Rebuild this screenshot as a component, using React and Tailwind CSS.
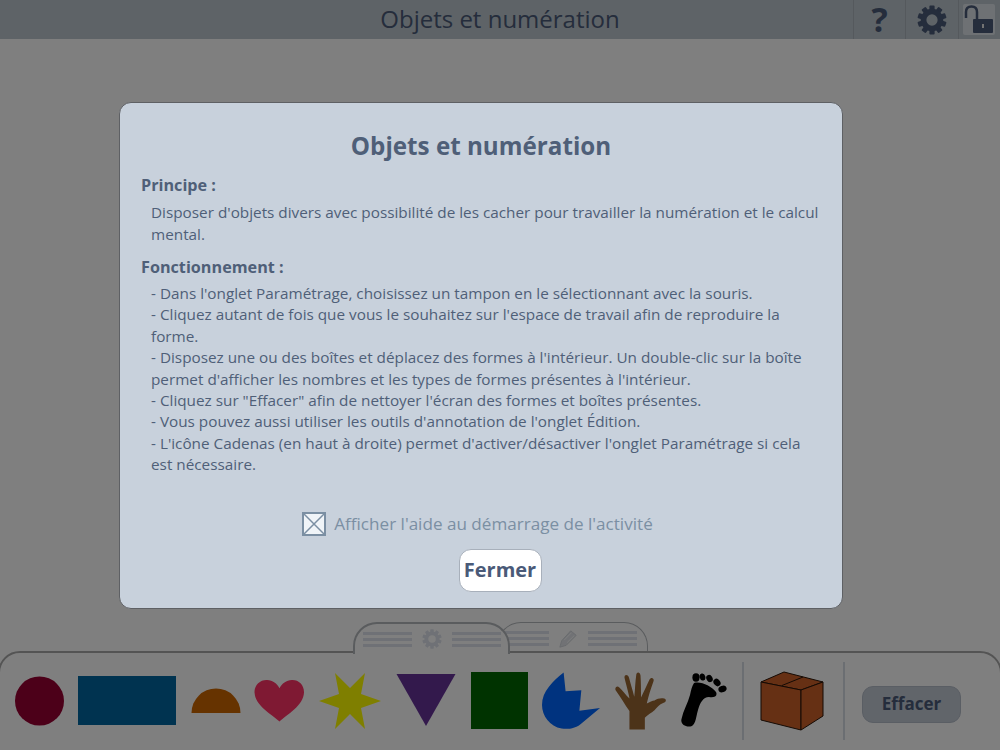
const FONT = { fontFamily: '"Open Sans","Noto Sans",sans-serif' };

function Gear({ size, color }) {
  const teeth = [0, 36, 72, 108, 144, 180, 216, 252, 288, 324];
  return (
    <svg width={size} height={size} viewBox="0 0 32 32">
      {teeth.map((a) => (
        <rect key={a} x="13.2" y="0.5" width="5.6" height="8" rx="1" fill={color} transform={`rotate(${a} 16 16)`} />
      ))}
      <circle cx="16" cy="16" r="9" fill="none" stroke={color} strokeWidth="6" />
    </svg>
  );
}

function Lines() {
  return (
    <div className="flex flex-col gap-[3px] w-[49px] shrink-0">
      <div className="h-[3px] bg-[#dfe3ec]" />
      <div className="h-[3px] bg-[#dfe3ec]" />
      <div className="h-[3px] bg-[#dfe3ec]" />
    </div>
  );
}

function Shapes() {
  return (
    <div className="flex items-center h-[99px] pl-[15px]">
      <svg width="50" height="50" viewBox="0 0 50 50" className="shrink-0">
        <circle cx="24.5" cy="25" r="24.5" fill="#990033" />
      </svg>
      <div className="w-[98px] h-[49px] bg-[#0066a0] ml-[13px] shrink-0" />
      <svg width="50" height="26" viewBox="0 0 50 26" className="ml-[15px] shrink-0">
        <path d="M0.5 25 A24.5 24.5 0 0 1 49.5 25 Z" fill="#cc6600" />
      </svg>
      <svg width="51" height="44" viewBox="0 0 52 44" className="ml-[13px] shrink-0">
        <path d="M26 43 C19 36 1 27 0.5 13 C0.5 5 7 0 13.5 0.5 C19 0.7 23.5 4 26 9 C28.5 4 33 0.7 38.5 0.5 C45 0 51 5 51 13 C50.5 27 33 36 26 43 Z" fill="#ff3366" />
      </svg>
      <svg width="62" height="56" viewBox="0 0 62 56" className="ml-[14px] shrink-0">
        <polygon points="0,28 20,21 16,0 31,15 46,0 42,21 62,28 42,35 46,56 31,41 16,56 20,35" fill="#ffff00" />
      </svg>
      <svg width="60" height="53" viewBox="0 0 60 53" className="ml-[15px] shrink-0">
        <polygon points="0.5,0 59.5,0 30,52" fill="#663399" />
      </svg>
      <div className="w-[57px] h-[57px] bg-[#006600] ml-[15px] shrink-0" />
      <svg width="59" height="58" viewBox="0 0 60 58" className="ml-[14px] shrink-0">
        <path d="M22 0 L24 19 L40 18 L38 39 L59 36 L41 51 C35 57 26 58 20 57 C8 55 0 44 0 33 C0 19 11 9 22 0 Z" fill="#0066ff" />
      </svg>
      <svg width="52" height="59" viewBox="0 0 54 60" className="ml-[14px] shrink-0">
        <path d="M15 60 L15 41 C10 34 6 27 1 20 C-1 17 2 14 4.5 16.5 C8 20 11 24 15 28 C14 21 11 12 10 7 C9 3 13 2 14.5 6 C16 12 18 18 20 26 C21 18 21 10 22 4 C22 0 26 0 26.5 4 C27 11 27 19 27 27 C30 21 33 14 36 8 C38 5 41 7 40 10 C37 18 35 25 33 33 C36 32 39 30 41 30 C44 28 48 27 51 28 C54 29 53 32 50 32.5 C46 34 44 37 41 40 C38 43 33 45 31 48 L31 60 Z" fill="#996633" />
      </svg>
      <svg width="47" height="55" viewBox="0 0 47 55" className="ml-[14px] shrink-0">
        <g fill="#000">
          <path d="M13 10 C20 8 30 13 35 19 C37 23 33 25 28 24 C22 24 19 30 17 37 C15 44 15 50 11 53 C6 55 -1 52 0.5 46 C2 38 7 30 9 22 C10 17 11 13 13 10 Z" />
          <ellipse cx="15" cy="4.5" rx="3.6" ry="4.2" />
          <ellipse cx="21.5" cy="4" rx="2.8" ry="3.6" transform="rotate(-15 21.5 4)" />
          <ellipse cx="28.5" cy="5.5" rx="3" ry="3.8" transform="rotate(-30 28.5 5.5)" />
          <ellipse cx="36" cy="9.5" rx="3.2" ry="4" transform="rotate(-40 36 9.5)" />
          <ellipse cx="41.5" cy="16" rx="4.2" ry="3.2" transform="rotate(-20 41.5 16)" />
        </g>
      </svg>
      <div className="w-[2px] h-[78px] bg-[#d6dce4] ml-[14px] shrink-0" />
      <svg width="66" height="60" viewBox="0 0 66 60" className="ml-[16px] shrink-0">
        <g fill="#cc6029" stroke="#2a1508" strokeWidth="1" strokeLinejoin="round">
          <polygon points="1,11 24,1 63,11 41,19" />
          <polygon points="1,11 41,19 41,59 1,49" />
          <polygon points="41,19 63,11 63,45 41,59" />
          <line x1="22" y1="14.5" x2="43" y2="6" />
        </g>
      </svg>
      <div className="w-[2px] h-[78px] bg-[#d6dce4] ml-[17px] shrink-0" />
      <button className="ml-[17px] mt-[7px] w-[99px] h-[37px] rounded-[11px] bg-[#c3cad5] border border-[#b4bcc8] text-[#4a5a78] font-bold text-[17px] shrink-0" style={FONT}>
        Effacer
      </button>
    </div>
  );
}

export default function App() {
  return (
    <div className="relative w-[1000px] h-[750px] overflow-hidden bg-white flex flex-col" style={FONT}>
      <header className="h-[39px] bg-[#bcc6ce] flex shrink-0 relative">
        <div className="flex-1 text-center text-[24px] leading-[38px] text-[#4a5a78]">Objets et numération</div>
        <div className="absolute right-0 top-0 h-[39px] flex">
          <div className="w-[52px] border-l border-[#aab3bb] flex items-center justify-center text-[#4a5a78] font-bold text-[34px] leading-[39px]">?</div>
          <div className="w-[53px] border-l border-[#aab3bb] flex items-center justify-center">
            <Gear size={30} color="#4a5a78" />
          </div>
          <div className="w-[42px] border-l border-[#aab3bb] flex items-center pl-[4px]">
            <div className="w-[32px] h-[31px] rounded-[2px] bg-[#dde3e8] flex items-center justify-center">
              <svg width="32" height="31" viewBox="0 0 32 31">
                <path d="M3 14 V8 C3 3.5 5.5 2.5 8.5 2.5 C11.5 2.5 14 3.5 14 8 V15" fill="none" stroke="#4a5a78" strokeWidth="2.5" />
                <rect x="10" y="15" width="20" height="14" rx="1" fill="#4a5a78" />
                <rect x="19" y="20" width="2" height="4" fill="#e6e6e6" />
              </svg>
            </div>
          </div>
        </div>
      </header>
      <main className="flex-1" />
      <div className="relative h-[99px] shrink-0">
        <div className="absolute left-[497px] top-[-29px] w-[151px] h-[32px] rounded-t-[24px] border border-b-0 border-[#b4b8bc] bg-white flex items-center justify-start gap-[9px] pl-[2px]">
          <Lines />
          <svg width="20" height="20" viewBox="0 0 22 22" className="shrink-0 mr-[1px]">
            <path d="M2 20 L4 13 L14 2 L20 7 L9 18 Z" fill="#e2e5ea" stroke="#d0d4da" strokeWidth="1" />
            <path d="M7 12 L15 4 M10 15 L18 7" stroke="#fff" strokeWidth="1" />
          </svg>
          <Lines />
        </div>
        <div className="absolute left-[-2px] right-[-2px] top-0 h-[101px] rounded-t-[22px] border-2 border-[#a8a8a8] bg-white" />
        <div className="absolute left-[353px] top-[-29px] w-[157px] h-[32px] rounded-t-[24px] border-x-2 border-t-2 border-[#b4b8bc] bg-white flex items-center justify-center gap-[10px]">
          <Lines />
          <Gear size={20} color="#dfe3ec" />
          <Lines />
        </div>
        <div className="absolute inset-0 rounded-t-[24px] overflow-hidden">
          <Shapes />
        </div>
      </div>

      <div className="absolute inset-0 bg-black/50" />

      <div className="absolute left-[119px] top-[102px] w-[724px] h-[507px] rounded-[12px] border border-[#5e6064] bg-[#c8d1dc] text-[#4f5f78] px-[21px]">
        <h1 className="text-center font-bold text-[24.2px] leading-[34px] mt-[26px]">Objets et numération</h1>
        <h2 className="font-bold text-[16.2px] leading-[22px] mt-[11px]">Principe :</h2>
        <p className="text-[15.3px] leading-[21.5px] pl-[10px] mt-[6px]">
          Disposer d'objets divers avec possibilité de les cacher pour travailler la numération et le calcul mental.
        </p>
        <h2 className="font-bold text-[16.2px] leading-[22px] mt-[11px]">Fonctionnement :</h2>
        <p className="text-[15.3px] leading-[21.4px] pl-[10px] mt-[5px]">
          - Dans l'onglet Paramétrage, choisissez un tampon en le sélectionnant avec la souris.<br />
          - Cliquez autant de fois que vous le souhaitez sur l'espace de travail afin de reproduire la forme.<br />
          - Disposez une ou des boîtes et déplacez des formes à l'intérieur. Un double-clic sur la boîte permet d'afficher les nombres et les types de formes présentes à l'intérieur.<br />
          - Cliquez sur "Effacer" afin de nettoyer l'écran des formes et boîtes présentes.<br />
          - Vous pouvez aussi utiliser les outils d'annotation de l'onglet Édition.<br />
          - L'icône Cadenas (en haut à droite) permet d'activer/désactiver l'onglet Paramétrage si cela est nécessaire.
        </p>
        <div className="flex items-center justify-center gap-[8px] mt-[36px] pr-[7px] text-[#7b8fa3] text-[17.1px] h-[24px]">
          <svg width="24" height="24" viewBox="0 0 24 24" className="shrink-0">
            <rect x="1" y="1" width="22" height="22" fill="#f0f4f8" stroke="#7b8fa3" strokeWidth="2" />
            <path d="M2 2 L22 22 M22 2 L2 22" stroke="#7b8fa3" strokeWidth="1.5" />
          </svg>
          <span className="whitespace-nowrap">Afficher l'aide au démarrage de l'activité</span>
        </div>
        <div className="flex justify-center mt-[13px] pl-[38px]">
          <button className="w-[83px] h-[43px] rounded-[12px] bg-white border border-[#a8b0bb] font-bold text-[20px] text-[#4a5a78]">Fermer</button>
        </div>
      </div>
    </div>
  );
}
